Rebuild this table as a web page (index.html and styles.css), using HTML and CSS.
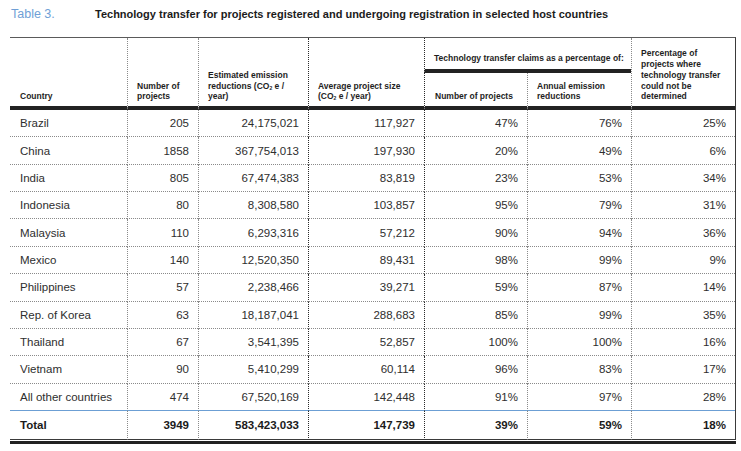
FILE: index.html
```html
<!DOCTYPE html>
<html lang="en">
<head>
<meta charset="utf-8">
<title>Table 3</title>
<link rel="stylesheet" href="styles.css">
</head>
<body>
<div class="page">
  <div class="caption">
    <span class="label">Table 3.</span>
    <span class="title">Technology transfer for projects registered and undergoing registration in selected host countries</span>
  </div>
  <table class="data">
    <colgroup>
      <col class="w-country">
      <col class="w-num">
      <col class="w-est">
      <col class="w-avg">
      <col class="w-p1">
      <col class="w-p2">
      <col class="w-p3">
    </colgroup>
    <thead>
      <tr class="h1">
        <th rowspan="2" class="hd base">Country</th>
        <th rowspan="2" class="hd base vg">Number of<br>projects</th>
        <th rowspan="2" class="hd base vg">Estimated emission<br>reductions (CO<sub>2</sub> e /<br>year)</th>
        <th rowspan="2" class="hd base vd">Average project size<br>(CO<sub>2</sub> e / year)</th>
        <th colspan="2" class="hd group vd">Technology transfer claims as a percentage of:</th>
        <th rowspan="2" class="hd base vg">Percentage of<br>projects where<br>technology transfer<br>could not be<br>determined</th>
      </tr>
      <tr class="h2">
        <th class="hd base vd">Number of projects</th>
        <th class="hd base vg">Annual emission<br>reductions</th>
      </tr>
    </thead>
    <tbody>
      <tr><td>Brazil</td><td>205</td><td>24,175,021</td><td>117,927</td><td>47%</td><td>76%</td><td>25%</td></tr>
      <tr><td>China</td><td>1858</td><td>367,754,013</td><td>197,930</td><td>20%</td><td>49%</td><td>6%</td></tr>
      <tr><td>India</td><td>805</td><td>67,474,383</td><td>83,819</td><td>23%</td><td>53%</td><td>34%</td></tr>
      <tr><td>Indonesia</td><td>80</td><td>8,308,580</td><td>103,857</td><td>95%</td><td>79%</td><td>31%</td></tr>
      <tr><td>Malaysia</td><td>110</td><td>6,293,316</td><td>57,212</td><td>90%</td><td>94%</td><td>36%</td></tr>
      <tr><td>Mexico</td><td>140</td><td>12,520,350</td><td>89,431</td><td>98%</td><td>99%</td><td>9%</td></tr>
      <tr><td>Philippines</td><td>57</td><td>2,238,466</td><td>39,271</td><td>59%</td><td>87%</td><td>14%</td></tr>
      <tr><td>Rep. of Korea</td><td>63</td><td>18,187,041</td><td>288,683</td><td>85%</td><td>99%</td><td>35%</td></tr>
      <tr><td>Thailand</td><td>67</td><td>3,541,395</td><td>52,857</td><td>100%</td><td>100%</td><td>16%</td></tr>
      <tr><td>Vietnam</td><td>90</td><td>5,410,299</td><td>60,114</td><td>96%</td><td>83%</td><td>17%</td></tr>
      <tr class="last"><td>All other countries</td><td>474</td><td>67,520,169</td><td>142,448</td><td>91%</td><td>97%</td><td>28%</td></tr>
      <tr class="total"><td>Total</td><td>3949</td><td>583,423,033</td><td>147,739</td><td>39%</td><td>59%</td><td>18%</td></tr>
    </tbody>
  </table>
  <div class="end-rule"></div>
</div>
</body>
</html>
```

FILE: styles.css
```css
html, body {
  margin: 0;
  padding: 0;
  background: #ffffff;
}

.page {
  width: 741px;
  padding-left: 10px;
  box-sizing: border-box;
  font-family: "Liberation Sans", Arial, sans-serif;
  color: #2b2b2b;
}

.caption {
  height: 37px;
  line-height: 28px;
  display: flex;
  align-items: flex-start;
  white-space: nowrap;
}

.label {
  width: 84px;
  padding-left: 1px;
  font-size: 12.5px;
  color: #6f9fd6;
}

.title {
  font-size: 11px;
  font-weight: bold;
  color: #1b1b1b;
}

.data {
  border-collapse: separate;
  border-spacing: 0;
  table-layout: fixed;
  width: 725px;
  border-top: 1px solid #5a5a5a;
  border-right: 1px solid #3a3a3a;
}

.w-country { width: 117px; }
.w-num { width: 71px; }
.w-est { width: 110px; }
.w-avg { width: 116px; }
.w-p1 { width: 103px; }
.w-p2 { width: 104px; }
.w-p3 { width: 104px; }

.hd {
  font-size: 8.5px;
  line-height: 10.7px;
  font-weight: bold;
  color: #1e1e1e;
  text-align: left;
  vertical-align: bottom;
  padding: 0 6px 4px 9px;
}

.hd:first-child { padding-left: 10px; }

.hd sub {
  font-size: 5px;
  line-height: 0;
  vertical-align: -1px;
}

.h1 { height: 35px; }
.h2 { height: 37px; }

.base { border-bottom: 4px solid #222222; }

.group {
  vertical-align: bottom;
  border-bottom: 4px solid #222222;
  padding-bottom: 5px;
}

.vg { border-left: 1px dotted #8a8a8a; }
.vd { border-left: 1px dotted #2a2a2a; }

.data td {
  font-size: 11.5px;
  color: #2e2e2e;
  padding: 0 9px 0 9px;
  text-align: right;
  vertical-align: middle;
  white-space: nowrap;
  border-bottom: 1px dotted #8a8a8a;
}

.data tbody tr { height: 27.36px; }

.data td:first-child {
  text-align: left;
  padding-left: 10px;
}

.data td:nth-child(2),
.data td:nth-child(3),
.data td:nth-child(6),
.data td:nth-child(7) { border-left: 1px dotted #8a8a8a; }

.data td:nth-child(4),
.data td:nth-child(5) { border-left: 1px dotted #2a2a2a; }

.data tr.last td { border-bottom: 1px solid #6c9fd4; }

.data tr.total { height: 29px; }

.data tr.total td {
  font-weight: bold;
  color: #1b1b1b;
  border-bottom: 1px solid #3a3a3a;
}

.end-rule {
  width: 726px;
  height: 1px;
  border-bottom: 3px solid #222222;
}
```
